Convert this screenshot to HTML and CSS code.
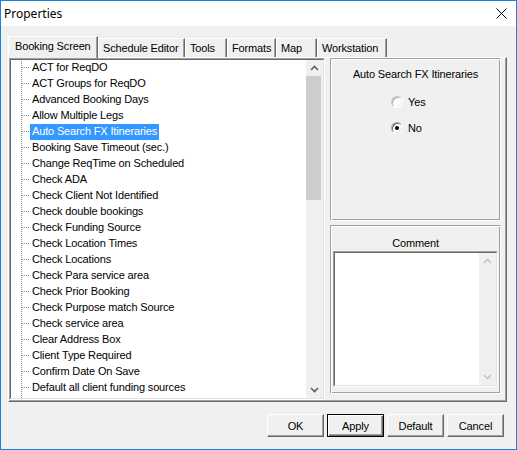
FILE: index.html
```html
<!DOCTYPE html>
<html>
<head>
<meta charset="utf-8">
<link rel="stylesheet" href="styles.css">
</head>
<body>
<div class="window">
  <div class="titlebar">
    <span class="title">Properties</span>
    <svg class="close" width="11" height="11" viewBox="0 0 11 11"><path d="M0.5 0.5 L10.5 10.5 M10.5 0.5 L0.5 10.5" stroke="#000" stroke-width="1" fill="none"/></svg>
  </div>
  <div class="client">
    <div class="tabs">
      <div class="tab sel t1">Booking Screen</div>
      <div class="tab t2">Schedule Editor</div>
      <div class="tab t3">Tools</div>
      <div class="tab t4">Formats</div>
      <div class="tab t5">Map</div>
      <div class="tab t6">Workstation</div>
    </div>
    <div class="page">
      <div class="listbox">
        <div class="listbox-in">
          <div class="tree">
            <div class="row"><span class="lbl">ACT for ReqDO</span></div>
            <div class="row"><span class="lbl">ACT Groups for ReqDO</span></div>
            <div class="row"><span class="lbl">Advanced Booking Days</span></div>
            <div class="row"><span class="lbl">Allow Multiple Legs</span></div>
            <div class="row"><span class="lbl selected">Auto Search FX Itineraries</span></div>
            <div class="row"><span class="lbl">Booking Save Timeout (sec.)</span></div>
            <div class="row"><span class="lbl">Change ReqTime on Scheduled</span></div>
            <div class="row"><span class="lbl">Check ADA</span></div>
            <div class="row"><span class="lbl">Check Client Not Identified</span></div>
            <div class="row"><span class="lbl">Check double bookings</span></div>
            <div class="row"><span class="lbl">Check Funding Source</span></div>
            <div class="row"><span class="lbl">Check Location Times</span></div>
            <div class="row"><span class="lbl">Check Locations</span></div>
            <div class="row"><span class="lbl">Check Para service area</span></div>
            <div class="row"><span class="lbl">Check Prior Booking</span></div>
            <div class="row"><span class="lbl">Check Purpose match Source</span></div>
            <div class="row"><span class="lbl">Check service area</span></div>
            <div class="row"><span class="lbl">Clear Address Box</span></div>
            <div class="row"><span class="lbl">Client Type Required</span></div>
            <div class="row"><span class="lbl">Confirm Date On Save</span></div>
            <div class="row"><span class="lbl">Default all client funding sources</span></div>
          </div>
          <div class="vscroll">
            <div class="sbtn"><svg width="9" height="6" viewBox="0 0 9 6"><polyline points="1,5 4.5,1.5 8,5" fill="none" stroke="#606060" stroke-width="1.6"/></svg></div>
            <div class="track"><div class="thumb"></div></div>
            <div class="sbtn"><svg width="9" height="6" viewBox="0 0 9 6"><polyline points="1,1 4.5,4.5 8,1" fill="none" stroke="#606060" stroke-width="1.6"/></svg></div>
          </div>
        </div>
      </div>
      <div class="side">
        <div class="group g1">
          <div class="gtitle t-auto">Auto Search FX Itineraries</div>
          <div class="radios">
            <div class="radio r-yes"><span class="rbox"></span><span>Yes</span></div>
            <div class="radio r-no"><span class="rbox on"></span><span>No</span></div>
          </div>
        </div>
        <div class="group g2">
          <div class="gtitle t-comment">Comment</div>
          <div class="memo">
            <div class="memo-in">
              <div class="memo-text"></div>
              <div class="vscroll dis">
                <div class="sbtn"><svg width="9" height="6" viewBox="0 0 9 6"><polyline points="1,5 4.5,1.5 8,5" fill="none" stroke="#c4c4c4" stroke-width="1.6"/></svg></div>
                <div class="track"></div>
                <div class="sbtn"><svg width="9" height="6" viewBox="0 0 9 6"><polyline points="1,1 4.5,4.5 8,1" fill="none" stroke="#c4c4c4" stroke-width="1.6"/></svg></div>
              </div>
            </div>
          </div>
        </div>
      </div>
    </div>
    <div class="buttons">
      <div class="btn">OK</div>
      <div class="btn default">Apply</div>
      <div class="btn">Default</div>
      <div class="btn">Cancel</div>
    </div>
  </div>
</div>
</body>
</html>
```

FILE: styles.css
```css
* { box-sizing: border-box; }
html, body { margin: 0; padding: 0; }
body {
  width: 517px;
  height: 450px;
  overflow: hidden;
  background: #f0f0f0;
  font-family: "Liberation Sans", Arial, sans-serif;
  font-size: 11px;
  letter-spacing: -0.15px;
  color: #000;
}
.window {
  width: 517px;
  height: 450px;
  border: 1px solid #1883d7;
  background: #f0f0f0;
  display: flex;
  flex-direction: column;
}
.titlebar {
  height: 25px;
  background: #fff;
  display: flex;
  align-items: center;
  padding-left: 3px;
}
.title {
  font-family: "Noto Sans", "Liberation Sans", sans-serif;
  font-size: 12px;
  letter-spacing: 0;
  line-height: 25px;
}
.close {
  margin-left: auto;
  margin-right: 9px;
  display: block;
}
.client {
  flex: 1;
  padding-top: 10px;
  display: flex;
  flex-direction: column;
}
.tabs {
  height: 21px;
  display: flex;
  align-items: flex-end;
  padding-left: 7px;
}
.tab {
  height: 19px;
  border-top: 1px solid #fff;
  border-left: 1px solid #fff;
  border-right: 1px solid #696969;
  box-shadow: inset -1px 0 #a0a0a0;
  padding-left: 4px;
  padding-top: 1px;
  line-height: 16px;
  white-space: nowrap;
  overflow: hidden;
}
.tab.sel {
  height: 22px;
  margin-bottom: -1px;
  position: relative;
  z-index: 1;
  background: #f0f0f0;
  padding-left: 6px;
  padding-top: 1px;
}
.t1 { width: 90px; }
.t2 { width: 87px; }
.t3 { width: 42px; }
.t4 { width: 49px; }
.t5 { width: 41px; }
.t6 { width: 70px; }

.page {
  margin-left: 7px;
  width: 499px;
  height: 345px;
  border-top: 1px solid #fff;
  border-left: 1px solid #fff;
  border-right: 1px solid #696969;
  border-bottom: 1px solid #696969;
  box-shadow: inset -1px -1px #a0a0a0;
  display: flex;
  align-items: flex-start;
  padding-right: 5px;
}
.listbox {
  width: 316px;
  height: 342px;
  border: 1px solid;
  border-color: #a0a0a0 #fff #fff #a0a0a0;
}
.listbox-in {
  height: 100%;
  border: 1px solid;
  border-color: #696969 #e3e3e3 #e3e3e3 #696969;
  background: #fff;
  display: flex;
}
.tree {
  flex: 1;
  overflow: hidden;
  background-image: linear-gradient(to bottom, #8a8a8a 1px, transparent 1px);
  background-size: 1px 2px;
  background-repeat: repeat-y;
  background-position: 10px 1px;
}
.row {
  height: 16px;
  display: flex;
  align-items: flex-start;
  white-space: nowrap;
}
.row::before {
  content: "";
  width: 8px;
  height: 1px;
  margin-left: 11px;
  margin-top: 7px;
  background-image: linear-gradient(to right, #8a8a8a 1px, transparent 1px);
  background-size: 2px 1px;
  flex: none;
}
.lbl {
  padding: 0 2px 1px 2px;
  line-height: 15px;
  height: 16px;
}
.lbl.selected {
  background: #3399ff;
  color: #fff;
}
.vscroll {
  width: 17px;
  flex: none;
  background: #f0f0f0;
  display: flex;
  flex-direction: column;
}
.sbtn {
  height: 16px;
  display: flex;
  align-items: center;
  justify-content: center;
  flex: none;
}
.sbtn svg { display: block; }
.track {
  flex: 1;
}
.thumb {
  width: 15px;
  height: 124px;
  background: #cdcdcd;
}
.side {
  width: 171px;
  margin-left: 5px;
  display: flex;
  flex-direction: column;
  gap: 4px;
}
.group {
  border: 1px solid;
  border-color: #a0a0a0 #fff #fff #a0a0a0;
  box-shadow: inset 1px 1px #fff, inset -1px -1px #a0a0a0;
  display: flex;
  flex-direction: column;
}
.g1 { height: 163px; }
.g2 { height: 169px; }
.gtitle {
  text-align: center;
  line-height: 16px;
  height: 16px;
}
.t-auto { margin-top: 7px; }
.t-comment { margin-top: 9px; }
.radios {
  margin-top: 12px;
  padding-left: 60px;
  display: flex;
  flex-direction: column;
  gap: 10px;
}
.radio {
  height: 16px;
  display: flex;
  align-items: center;
  gap: 5px;
  line-height: 16px;
}
.rbox {
  width: 12px;
  height: 12px;
  border-radius: 50%;
  background: #fff;
  border: 1px solid;
  border-color: #a0a0a0 #fff #fff #a0a0a0;
  box-shadow: inset 1px 1px #696969, inset -1px -1px #e3e3e3;
  display: flex;
  align-items: center;
  justify-content: center;
  flex: none;
}
.r-yes .rbox {
  border-color: #c8c8c8 #fff #fff #c8c8c8;
  box-shadow: inset 1px 1px #a8a8a8, inset -1px -1px #eeeeee;
}
.rbox.on::after {
  content: "";
  width: 4px;
  height: 4px;
  border-radius: 50%;
  background: #000;
}
.memo {
  margin: 0 2px;
  height: 136px;
  border: 1px solid;
  border-color: #a0a0a0 #fff #fff #a0a0a0;
}
.memo-in {
  height: 100%;
  border: 1px solid;
  border-color: #696969 #e3e3e3 #e3e3e3 #696969;
  background: #fff;
  display: flex;
}
.memo-text { flex: 1; }
.buttons {
  margin-top: 12px;
  display: flex;
  justify-content: flex-end;
  gap: 3px;
  padding-right: 12px;
}
.btn {
  width: 57px;
  height: 23px;
  border-top: 1px solid #fff;
  border-left: 1px solid #fff;
  border-right: 1px solid #696969;
  border-bottom: 1px solid #696969;
  box-shadow: inset -1px -1px #a0a0a0;
  background: #f0f0f0;
  display: flex;
  align-items: center;
  justify-content: center;
  line-height: 16px;
}
.btn.default {
  border: 1px solid #000;
  box-shadow: inset 1px 1px #fff, inset -1px -1px #696969, inset -2px -2px #a0a0a0;
}
```
